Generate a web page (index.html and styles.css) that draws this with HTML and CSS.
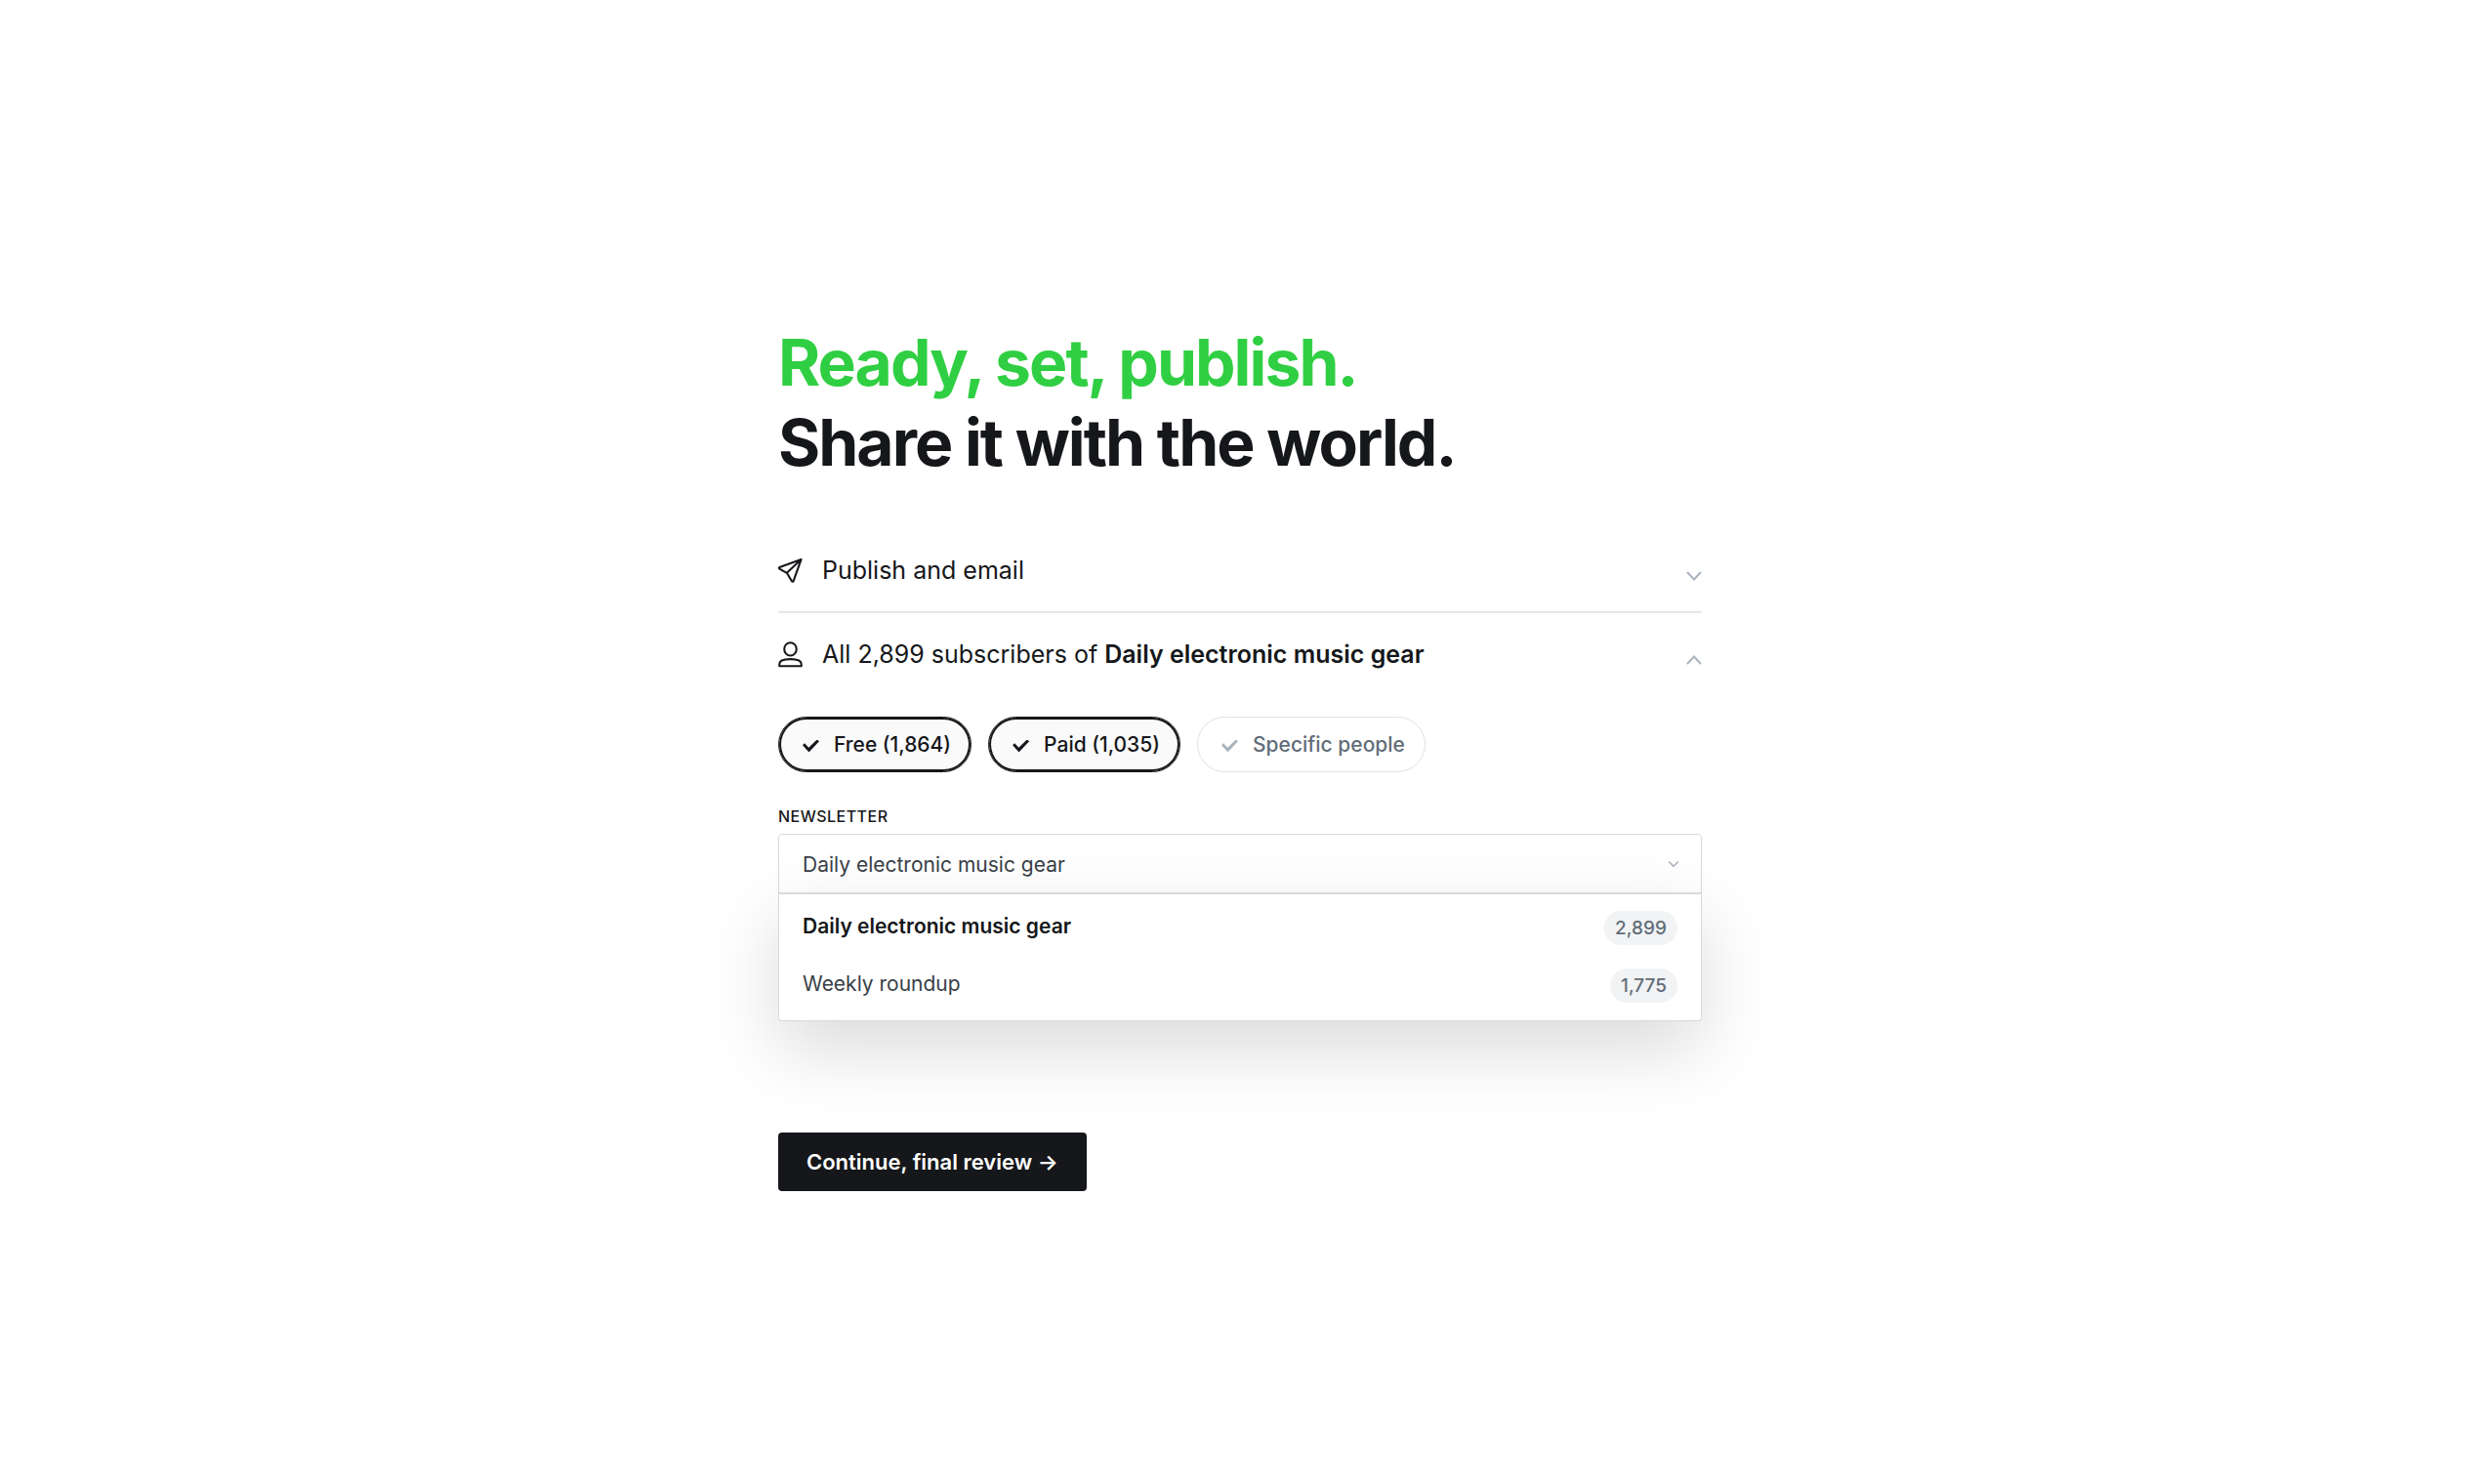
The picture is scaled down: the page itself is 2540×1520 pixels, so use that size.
FILE: index.html
```html
<!DOCTYPE html>
<html lang="en">
<head>
  <meta charset="UTF-8">
  <meta name="viewport" content="width=device-width, initial-scale=1">
  <title>Publish</title>
  <link rel="stylesheet" href="styles.css">
</head>
<body>

  <main class="publish">
    <h1 class="title"><span class="title-green">Ready, set, publish.</span><br>Share it with the world.</h1>

    <form class="options">
      <!-- Publish type -->
      <button type="button" class="setting" aria-expanded="false">
        <svg class="setting-icon" viewBox="0 0 24 24" aria-hidden="true">
          <path d="M22.600 1 1.400 8.600c-.8.3-.8 1.200-.1 1.600l7.200 4 4.900 8.200c.4.7 1.400.6 1.600-.2zM22.600 1 8.500 14.200"/>
        </svg>
        <span>Publish and email</span>
        <svg class="chevron" viewBox="0 0 16 12" aria-hidden="true"><path d="M1.500 2.500l6.500 7 6.500-7"/></svg>
      </button>

      <!-- Recipients -->
      <button type="button" class="setting" aria-expanded="true">
        <svg class="setting-icon" viewBox="0 0 24 24" aria-hidden="true">
          <ellipse cx="12" cy="6.600" rx="6" ry="6.400"/>
          <path d="M1.200 23.200v-1.800c0-3.300 4.300-5 10.800-5s10.800 1.700 10.800 5v1.800z"/>
        </svg>
        <span>All 2,899 subscribers of <strong>Daily electronic music gear</strong></span>
        <svg class="chevron" viewBox="0 0 16 12" aria-hidden="true"><path d="M1.500 9.500l6.500-7 6.500 7"/></svg>
      </button>

      <div class="pills">
        <label class="pill"><input type="checkbox" class="tick" checked>Free (1,864)</label>
        <label class="pill"><input type="checkbox" class="tick" checked>Paid (1,035)</label>
        <label class="pill"><input type="checkbox" class="tick">Specific people</label>
      </div>

      <label class="field-label" for="newsletter">Newsletter</label>
      <div class="dropdown">
        <select id="newsletter" class="select">
          <option selected>Daily electronic music gear</option>
          <option>Weekly roundup</option>
        </select>
        <svg class="select-arrow" viewBox="0 0 12 8" aria-hidden="true"><path d="M1.200 1.500l4.800 4.800 4.800-4.800"/></svg>
        <div class="menu" role="listbox" aria-label="Newsletter">
          <button type="button" class="menu-item" role="option" aria-selected="true">
            <span>Daily electronic music gear</span><span class="count">2,899</span>
          </button>
          <button type="button" class="menu-item" role="option" aria-selected="false">
            <span>Weekly roundup</span><span class="count">1,775</span>
          </button>
        </div>
      </div>

      <button type="submit" class="continue">Continue, final review →</button>
    </form>
  </main>

  <script>
    const select = document.getElementById('newsletter');
    const items = document.querySelectorAll('.menu-item');

    // Keep the select in step with the open menu
    items.forEach(function(item, index) {
      item.addEventListener('click', function() {
        items.forEach(other => other.setAttribute('aria-selected', other === item));
        select.selectedIndex = index;
      });
    });

    document.querySelector('.options').addEventListener('submit', function(e) {
      e.preventDefault();
    });
  </script>

</body>
</html>
```
FILE: styles.css
```css
* {
  box-sizing: border-box;
}

body {
  margin: 0;
  font-family: Inter, "Liberation Sans", sans-serif;
  font-size: 21px;
  color: #15171a;
  background: #fff;
}

button, select {
  font: inherit;
  color: inherit;
  cursor: pointer;
}

.publish {
  max-width: 946px;
  margin: 0 auto;
  padding: 330px 0 120px;
}

.title {
  margin: 0 0 48px;
  font-size: 66px;
  font-weight: 700;
  line-height: 82px;
  letter-spacing: -0.03em;
}

.title-green {
  color: #30cf43;
}

.options {
  display: flex;
  flex-direction: column;
}

.setting {
  display: flex;
  align-items: center;
  gap: 20px;
  padding: 24px 0;
  border: none;
  background: none;
  font-size: 25px;
  line-height: 36px;
  text-align: left;
}

.setting:first-child {
  border-bottom: 2px solid #e6e7e8;
}

.setting strong {
  font-weight: 600;
}

.setting-icon {
  width: 25px;
  height: 25px;
  fill: none;
  stroke: currentColor;
  stroke-width: 2;
  stroke-linejoin: round;
  overflow: visible;
}

.chevron {
  width: 16px;
  height: 12px;
  margin: 12px 0 0 auto;
  fill: none;
  stroke: #abb4be;
  stroke-width: 2;
  stroke-linecap: round;
}

.pills {
  display: flex;
  flex-wrap: wrap;
  gap: 17px;
  margin: 22px 0 35px;
}

.pill {
  display: flex;
  align-items: center;
  gap: 15px;
  height: 57px;
  padding: 0 20px 0 24px;
  border: 1px solid #dde1e5;
  border-radius: 30px;
  font-weight: 500;
  color: #626d79;
  cursor: pointer;
}

.pill:has(:checked) {
  border-color: #15171a;
  box-shadow: inset 0 0 0 2px #15171a;
  background: #fafafb;
  color: #15171a;
}

.tick {
  appearance: none;
  width: 17px;
  height: 13px;
  margin: 3px 0 0;
  background: #abb4be;
  clip-path: polygon(0 45%, 12% 29%, 37% 63%, 87% 0, 100% 14%, 38% 100%);
}

.tick:checked {
  background: #15171a;
}

.field-label {
  margin-bottom: 8px;
  font-size: 16px;
  line-height: 20px;
  font-weight: 500;
  letter-spacing: 0.03em;
  text-transform: uppercase;
}

.dropdown {
  display: grid;
  align-items: center;
  position: relative;
}

.select {
  grid-area: 1 / 1;
  appearance: none;
  width: 100%;
  height: 62px;
  padding: 0 24px;
  border: 1px solid #d8dadc;
  border-radius: 4px 4px 0 0;
  background: #fff;
  color: #394047;
}

.select-arrow {
  grid-area: 1 / 1;
  justify-self: end;
  width: 12px;
  height: 8px;
  margin-right: 23px;
  fill: none;
  stroke: #abb4be;
  stroke-width: 1.6;
  pointer-events: none;
}

.menu {
  position: absolute;
  top: calc(100% - 2px);
  left: 0;
  right: 0;
  padding: 3px 0 8px;
  border: 1px solid #d8dadc;
  border-top-width: 2px;
  border-radius: 0 0 4px 4px;
  background: #fff;
  box-shadow: 0 28px 76px rgba(0, 0, 0, 0.15);
}

.menu-item {
  display: flex;
  justify-content: space-between;
  align-items: center;
  width: 100%;
  height: 59px;
  padding: 0 24px;
  border: none;
  background: none;
  color: #394047;
}

.menu-item[aria-selected="true"] {
  font-weight: 600;
  color: #15171a;
}

.count {
  margin-top: 4px;
  padding: 0 11px;
  border-radius: 18px;
  background: #f1f3f4;
  color: #626d79;
  font-size: 19px;
  font-weight: 500;
  line-height: 35px;
}

.continue {
  align-self: flex-start;
  height: 60px;
  margin-top: 244px;
  padding: 0 29px;
  border: none;
  border-radius: 4px;
  background: #15171a;
  color: #fff;
  font-size: 22px;
  font-weight: 600;
}
```
